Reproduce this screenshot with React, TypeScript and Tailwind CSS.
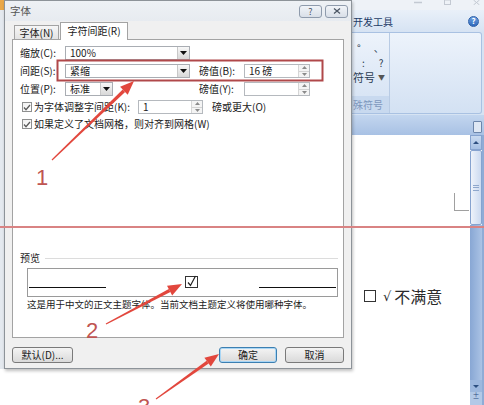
import type { ReactNode } from 'react';

const CJK = "font-['Noto_Sans_CJK_SC','Liberation_Sans',sans-serif]";

// tapered arrow shaft + head, returns two polygons
function arrow(x1: number, y1: number, x2: number, y2: number) {
  const dx = x2 - x1;
  const dy = y2 - y1;
  const len = Math.hypot(dx, dy);
  const ux = dx / len;
  const uy = dy / len;
  const nx = -uy;
  const ny = ux;
  const bx = x2 - ux * 14;
  const by = y2 - uy * 14;
  const p = (x: number, y: number) => `${x.toFixed(1)},${y.toFixed(1)}`;
  const shaft = [
    p(x1 + nx * 0.6, y1 + ny * 0.6),
    p(bx + nx * 1.7, by + ny * 1.7),
    p(bx - nx * 1.7, by - ny * 1.7),
    p(x1 - nx * 0.6, y1 - ny * 0.6),
  ].join(' ');
  const head = [p(x2, y2), p(bx + nx * 5.5, by + ny * 5.5), p(bx - nx * 5.5, by - ny * 5.5)].join(' ');
  return { shaft, head };
}

function DropArrow() {
  return (
    <span className="flex h-full w-[12px] items-center justify-center border-l border-[#c8c8c8] bg-linear-to-b from-[#f8f8f8] to-[#d8d8d8]">
      <svg width="7" height="4" viewBox="0 0 7 4">
        <path d="M0 0h7L3.5 4z" fill="#111" />
      </svg>
    </span>
  );
}

function Select({ value, w }: { value: string; w: string }) {
  return (
    <div className={`flex h-[14px] items-center border border-[#a9adb3] bg-white ${w}`}>
      <span className="flex-1 pl-[4px]">{value}</span>
      <DropArrow />
    </div>
  );
}

function Spin({ value, w }: { value: string; w: string }) {
  return (
    <div className={`flex h-[14px] items-center border border-[#b5b9be] bg-white ${w}`}>
      <span className="flex-1 pl-[4px]">{value}</span>
      <span className="flex h-full w-[11px] flex-col border-l border-[#d6d6d6] bg-[#f4f4f4]">
        <span className="flex flex-1 items-center justify-center">
          <svg width="5" height="3" viewBox="0 0 5 3">
            <path d="M0 3h5L2.5 0z" fill="#8a8a8a" />
          </svg>
        </span>
        <span className="h-px bg-[#d3d3d3]" />
        <span className="flex flex-1 items-center justify-center">
          <svg width="5" height="3" viewBox="0 0 5 3">
            <path d="M0 0h5L2.5 3z" fill="#8a8a8a" />
          </svg>
        </span>
      </span>
    </div>
  );
}

function Check() {
  return (
    <span className="flex h-[10px] w-[10px] items-center justify-center border border-[#8e8f8f] bg-linear-to-br from-[#f0f0f0] to-white">
      <svg width="8" height="7" viewBox="0 0 8 7">
        <path d="M1 3.5l2 2.2L7 1" fill="none" stroke="#5a5a5a" strokeWidth="1.3" />
      </svg>
    </span>
  );
}

function Btn({ children, className }: { children: ReactNode; className: string }) {
  return (
    <div
      className={`flex h-[16px] items-center justify-center rounded-[3px] border bg-linear-to-b from-[#f4f4f4] to-[#dadada] ${className}`}
    >
      {children}
    </div>
  );
}

function TitleButton({ children }: { children: ReactNode }) {
  return (
    <span className="flex h-[13px] w-[23px] items-center justify-center rounded-[3px] border border-[#8f9bac] bg-linear-to-b from-[#f1f4f8] to-[#d9dfe8] text-[9px] text-[#4b5563]">
      {children}
    </span>
  );
}

function Dialog() {
  return (
    <div className="flex h-[369px] flex-col border border-[#8d9399] bg-[#f0f0f0] text-[10px] leading-none shadow-[1px_2px_3px_rgba(0,0,0,0.25)]">
      <div className="flex h-[20px] items-center bg-linear-to-b from-[#eef1f5] to-[#e7ebf0] pl-[5px] pr-[3px]">
        <span className="text-[10.5px] text-[#555]">字体</span>
        <div className="ml-auto flex gap-[3px]">
          <TitleButton>?</TitleButton>
          <TitleButton>
            <svg width="8" height="6" viewBox="0 0 8 6">
              <path d="M1 0.5l6 5M7 0.5l-6 5" stroke="#4b5563" strokeWidth="1.2" />
            </svg>
          </TitleButton>
        </div>
      </div>

      <div className="flex flex-1 flex-col px-[7px] pt-[1px]">
        <div className="flex h-[17px] items-end pl-[2px]">
          <div className="flex h-[14px] w-[45px] items-center justify-center border border-b-0 border-[#a3a3a3] bg-linear-to-b from-[#f6f6f6] to-[#e3e3e3]">
            字体(N)
          </div>
          <div className="relative z-10 -mb-px ml-px flex h-[18px] w-[68px] items-center justify-center border border-b-0 border-[#a3a3a3] bg-white pb-[2px]">
            字符间距(R)
          </div>
        </div>

        <div className="flex h-[299px] flex-col border border-[#a3a3a3] bg-white pl-[7px] pr-[5px]">
          <div className="mt-[6px] flex h-[14px] items-center">
            <span className="w-[45px]">缩放(C):</span>
            <Select value="100%" w="w-[125px]" />
          </div>
          <div className="mt-[4px] flex h-[14px] items-center">
            <span className="w-[45px]">间距(S):</span>
            <Select value="紧缩" w="w-[125px]" />
            <span className="ml-[9px] w-[45px]">磅值(B):</span>
            <Spin value="16 磅" w="w-[66px]" />
          </div>
          <div className="mt-[4px] flex h-[14px] items-center">
            <span className="w-[45px]">位置(P):</span>
            <div className="w-[125px]">
              <Select value="标准" w="w-[48px]" />
            </div>
            <span className="ml-[9px] w-[45px]">磅值(Y):</span>
            <Spin value="" w="w-[66px]" />
          </div>
          <div className="mt-[4px] flex h-[14px] items-center">
            <span className="ml-[2px]">
              <Check />
            </span>
            <span className="ml-[2px] w-[104px]">为字体调整字间距(K):</span>
            <Spin value="1" w="w-[65px]" />
            <span className="ml-[9px]">磅或更大(O)</span>
          </div>
          <div className="mt-[3px] flex h-[14px] items-center">
            <span className="ml-[2px]">
              <Check />
            </span>
            <span className="ml-[2px]">如果定义了文档网格，则对齐到网格(W)</span>
          </div>

          <div className="mt-[121px] flex h-[12px] items-center">
            <span>预览</span>
            <span className="ml-[5px] h-px flex-1 bg-[#dcdcdc]" />
          </div>
          <div className="ml-[7px] mt-[4px] flex h-[29px] items-center border border-[#9a9a9a] px-px">
            <span className="mt-[10px] h-px w-[77px] bg-[#111]" />
            <span className="ml-[79px] mt-[-2px]">
              <svg width="14" height="13" viewBox="0 0 14 13">
                <rect x="0.5" y="1.5" width="12" height="11" fill="none" stroke="#333" />
                <path d="M3 7.5l2.5 3L10.5 1" fill="none" stroke="#222" strokeWidth="1.2" />
              </svg>
            </span>
            <span className="ml-auto mt-[10px] h-px w-[77px] bg-[#111]" />
          </div>
          <div className="ml-[7px] mt-[3px] text-[9.5px] text-[#222]">
            这是用于中文的正文主题字体。当前文档主题定义将使用哪种字体。
          </div>
        </div>

        <div className="mt-[9px] flex">
          <Btn className="w-[61px] border-[#7a7a7a]">默认(D)...</Btn>
          <Btn className="ml-auto w-[58px] border-[#3c7fb1] shadow-[inset_0_0_0_1px_#a9d6f5]">确定</Btn>
          <Btn className="ml-[8px] w-[59px] border-[#7a7a7a]">取消</Btn>
        </div>
      </div>
    </div>
  );
}

function WordPane() {
  return (
    <div className="flex w-[132px] flex-col">
      <div className="flex h-[10px] items-start justify-end gap-[22px] bg-[#eef2f7] pr-[4px]">
        <svg width="8" height="4" viewBox="0 0 8 4">
          <path d="M0 2.5h8" stroke="#c3c9d2" strokeWidth="1.5" />
        </svg>
        <svg width="7" height="5" viewBox="0 0 7 5">
          <rect x="0.5" y="0" width="6" height="4.5" fill="none" stroke="#c3c9d2" />
        </svg>
        <svg width="7" height="5" viewBox="0 0 7 5">
          <path d="M0.5 0l6 5M6.5 0l-6 5" stroke="#c3c9d2" />
        </svg>
      </div>
      <div className="flex h-[22px] items-center bg-linear-to-b from-[#e9f0f9] to-[#d6e3f3] pl-[1px] pr-[5px]">
        <span className="text-[10px] text-[#1d3b66]">开发工具</span>
        <span className="ml-auto flex h-[11px] w-[11px] items-center justify-center rounded-full border border-[#2d5fa8] bg-linear-to-b from-[#6ea2e2] to-[#2e68bb] text-[8px] font-bold leading-none text-white">
          ?
        </span>
      </div>
      <div className="flex h-[83px] bg-[#d6e3f3] pb-[1px] pr-[2px]">
        <div className="flex flex-1 rounded-r-[3px] border border-l-0 border-[#a9c1e2] bg-linear-to-b from-[#edf3fb] to-[#d3e1f3]">
          <div className="flex w-[38px] flex-col border-r border-[#b8cbe4] text-[10px] leading-none text-[#2b3b52]">
            <div className="flex flex-1 flex-col pt-[7px]">
              <div className="flex h-[15px] items-center">
                <span className="ml-[5px]">°</span>
                <span className="ml-[13px]">、</span>
              </div>
              <div className="flex h-[15px] items-center">
                <span className="ml-[10px]">:</span>
                <span className="ml-[14px]">?</span>
              </div>
              <div className="flex h-[15px] items-center">
                <span className="ml-[1px] text-[11px]">符号</span>
                <span className="ml-[3px] text-[7px] text-[#555]">▼</span>
              </div>
            </div>
            <div className="flex h-[17px] items-center bg-[#c8d9ef] pl-[1px] text-[#7d97bd]">殊符号</div>
          </div>
        </div>
      </div>
      <div className="flex h-[20px] items-end justify-end bg-linear-to-b from-[#c3d6ef] to-[#a8c1e4] pb-[2px] pr-[2px]">
        <span className="h-[12px] w-[9px] rounded-[1px] border border-[#6c86ab] bg-[#dfe8f4]" />
      </div>
      <div className="flex flex-1">
        <div className="relative flex-1 bg-white pl-[12px] pt-[151px]">
          <span className="absolute left-[102px] top-[58px] h-[18px] w-[15px] border-b border-l border-[#a0a0a0]" />
          <div className="flex h-[20px] items-center text-[16px] leading-none text-[#2a2a2a]">
            <span className="h-[12px] w-[12px] border-[1.5px] border-[#333]" />
            <span className="ml-[7px] font-['DejaVu_Sans',sans-serif] text-[13px]">√</span>
            <span className="ml-[3px]">不满意</span>
          </div>
        </div>
        <div className="flex w-[12px] flex-col">
          <div className="flex h-[15px] items-center justify-center border border-[#86a3cf] bg-linear-to-b from-[#c9daf0] to-[#a6c0e4]">
            <svg width="6" height="3" viewBox="0 0 6 3">
              <path d="M0 3h6L3 0z" fill="#2d4f80" />
            </svg>
          </div>
          <div className="flex h-[75px] items-center justify-center rounded-[2px] border border-[#86a3cf] bg-linear-to-r from-[#eef3fa] to-[#cbdaf0]">
            <span className="flex h-[6px] w-[6px] flex-col justify-between">
              <span className="h-px bg-[#8ea7cc]" />
              <span className="h-px bg-[#8ea7cc]" />
              <span className="h-px bg-[#8ea7cc]" />
            </span>
          </div>
          <div className="flex-1 bg-linear-to-r from-[#88a7d4] to-[#abc3e5]" />
          <div className="flex h-[12px] items-center justify-center bg-[#9db8de]">
            <svg width="6" height="3" viewBox="0 0 6 3">
              <path d="M0 0h6L3 3z" fill="#2d4f80" />
            </svg>
          </div>
          <div className="flex h-[13px] items-start justify-center bg-[#b3c9e7] text-[7px] leading-none text-[#2d4f80]">
            ±
          </div>
        </div>
        <div className="w-[2px] bg-[#8facd6]" />
      </div>
    </div>
  );
}

function Annotations() {
  const a1 = arrow(52, 160, 134, 81);
  const a2 = arrow(106, 324, 182, 284);
  const a3 = arrow(156, 399, 219, 354);
  return (
    <svg className="pointer-events-none absolute left-0 top-0 z-20" width="484" height="405" viewBox="0 0 484 405">
      <rect x="57.5" y="60.5" width="265" height="20" fill="none" stroke="#b0484a" strokeWidth="2" />
      <rect x="0" y="226" width="484" height="2" fill="#d98383" />
      {[a1, a2, a3].map((a, i) => (
        <g key={i} fill="#e2473d">
          <polygon points={a.shaft} />
          <polygon points={a.head} />
        </g>
      ))}
      <g fill="#bf5552" fontFamily="Liberation Sans, sans-serif" fontSize="22">
        <text x="36" y="185">1</text>
        <text x="86" y="338">2</text>
        <text x="138" y="414">3</text>
      </g>
    </svg>
  );
}

export default function App() {
  return (
    <div className={`relative flex h-[405px] w-[484px] overflow-hidden bg-white text-[#1a1a1a] ${CJK}`}>
      <div className="flex h-[369px] w-[4px] flex-col">
        <div className="h-[10px] bg-[#eaa84a]" />
        <div className="flex-1 bg-[#e4e9ef]" />
      </div>
      <div className="relative z-10 flex w-[348px] flex-col">
        <Dialog />
      </div>
      <WordPane />
      <Annotations />
    </div>
  );
}
